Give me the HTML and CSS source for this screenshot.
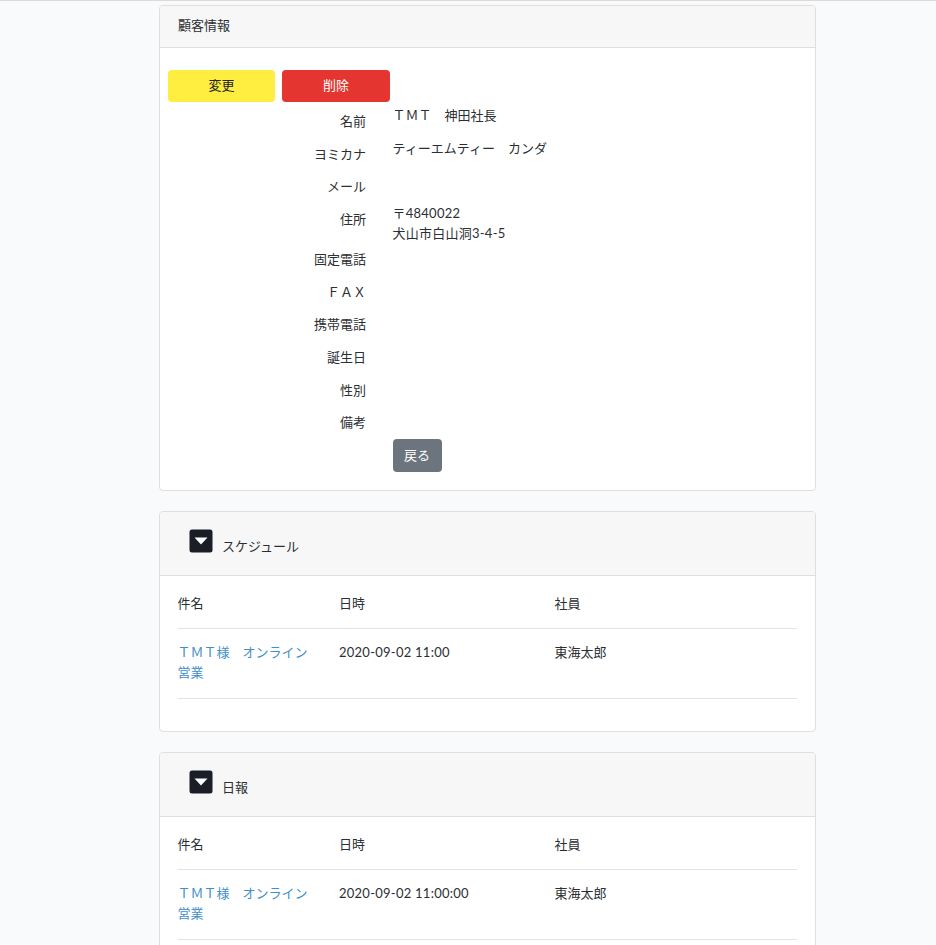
FILE: index.html
```html
<!DOCTYPE html>
<html lang="ja">
<head>
<meta charset="utf-8">
<title>顧客情報</title>
<link rel="stylesheet" href="styles.css">
</head>
<body>
<div class="topline"></div>
<main class="page">
  <section class="card card-info">
    <header class="card-head">顧客情報</header>
    <div class="info-body">
      <div class="actions">
        <button class="btn btn-yellow">変更</button>
        <button class="btn btn-red">削除</button>
      </div>
      <dl class="fields">
        <dt>名前</dt><dd>ＴＭＴ　神田社長</dd>
        <dt>ヨミカナ</dt><dd>ティーエムティー　カンダ</dd>
        <dt>メール</dt><dd></dd>
        <dt>住所</dt><dd class="num">〒4840022<br>犬山市白山洞3-4-5</dd>
        <dt>固定電話</dt><dd></dd>
        <dt>ＦＡＸ</dt><dd></dd>
        <dt>携帯電話</dt><dd></dd>
        <dt>誕生日</dt><dd></dd>
        <dt>性別</dt><dd></dd>
        <dt>備考</dt><dd></dd>
        <dt></dt><dd><button class="btn btn-gray">戻る</button></dd>
      </dl>
    </div>
  </section>

  <section class="card">
    <header class="card-head head-toggle">
      <svg class="toggle" viewBox="0 0 24 24" aria-hidden="true"><rect x="0.5" y="0.5" width="23" height="23" rx="2.5" fill="#1b1e26"/><path d="M5.5 8.5h13L12 15.5z" fill="#fff"/></svg>
      <span class="head-title">スケジュール</span>
    </header>
    <div class="table-body">
      <div class="t-row t-head"><div>件名</div><div>日時</div><div>社員</div></div>
      <div class="t-row"><div><a href="#">ＴＭＴ様　オンライン営業</a></div><div class="num">2020-09-02 11:00</div><div>東海太郎</div></div>
    </div>
  </section>

  <section class="card">
    <header class="card-head head-toggle">
      <svg class="toggle" viewBox="0 0 24 24" aria-hidden="true"><rect x="0.5" y="0.5" width="23" height="23" rx="2.5" fill="#1b1e26"/><path d="M5.5 8.5h13L12 15.5z" fill="#fff"/></svg>
      <span class="head-title">日報</span>
    </header>
    <div class="table-body">
      <div class="t-row t-head"><div>件名</div><div>日時</div><div>社員</div></div>
      <div class="t-row"><div><a href="#">ＴＭＴ様　オンライン営業</a></div><div class="num">2020-09-02 11:00:00</div><div>東海太郎</div></div>
    </div>
  </section>
</main>
</body>
</html>
```
FILE: styles.css
```css
* { box-sizing: border-box; }
html, body { margin: 0; height: 945px; overflow: hidden; }
body {
  background: #f8fafc;
  color: #2b2f33;
  font: 13px/20px Lato, "Noto Sans CJK JP", sans-serif;
}
.topline { height: 1px; background: #d8dadc; }
.page {
  width: 657px;
  margin-left: 159px;
  padding-top: 4px;
  display: flex;
  flex-direction: column;
  gap: 20px;
}
.card {
  background: #fff;
  border: 1px solid #dfdfdf;
  border-radius: 4px;
}
.card-head {
  height: 42px;
  padding: 9px 18px;
  background: #f7f7f7;
  border-bottom: 1px solid #dfdfdf;
  border-radius: 3px 3px 0 0;
}
.head-toggle {
  height: 64px;
  padding: 17px 29px 0;
  display: flex;
  align-items: flex-start;
  gap: 9px;
}
.toggle { width: 24px; height: 24px; flex: none; }
.head-title { margin-top: 7px; }
.info-body { padding: 22px 8px 18px; }
.actions { display: flex; gap: 7px; margin-bottom: 3px; }
.btn {
  font: inherit;
  height: 32px;
  border: 0;
  border-radius: 4px;
  color: #212529;
  padding: 0 0 2px;
}
.btn-yellow { width: 107px; background: #ffee3f; }
.btn-red { width: 108px; background: #e53530; color: #fff; }
.btn-gray { width: 49px; height: 33px; background: #6c757d; color: #fff; }
.fields {
  margin: 0;
  display: grid;
  grid-template-columns: 198px 1fr;
  column-gap: 26.5px;
}
.fields dt { text-align: right; padding: 5.95px 0 6.75px; min-height: 32.7px; }
.fields dd { margin: 0; }
.table-body { padding: 7px 18px 32px; }
.t-row {
  display: grid;
  grid-template-columns: 161px 215.5px 1fr;
  padding: 13px 0 16px;
  border-bottom: 1px solid #e3e3e3;
}
.t-row > div:first-child { padding-right: 28px; margin-left: -0.5px; }
.t-head { padding: 10px 0 15px; }
.num { letter-spacing: 0.25px; }
a { color: #3f8fc9; text-decoration: none; }
```
